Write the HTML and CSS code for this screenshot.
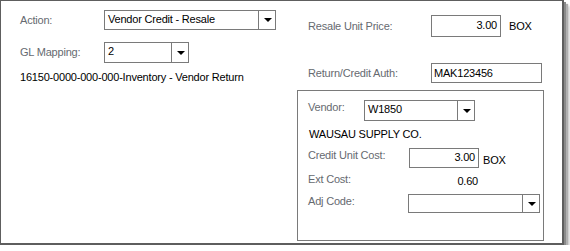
FILE: index.html
```html
<!DOCTYPE html>
<html>
<head>
<meta charset="utf-8">
<link rel="stylesheet" href="styles.css">
</head>
<body>
<div class="frame">
  <div class="left">
    <div class="row r1">
      <span class="lbl w84">Action:</span>
      <div class="combo c-action"><span class="val">Vendor Credit - Resale</span><span class="btn"><i class="tri"></i></span></div>
    </div>
    <div class="row r2">
      <span class="lbl w84">GL Mapping:</span>
      <div class="combo c-gl"><span class="val">2</span><span class="btn"><i class="tri"></i></span></div>
    </div>
    <div class="text account">16150-0000-000-000-Inventory - Vendor Return</div>
  </div>
  <div class="right">
    <div class="row r3">
      <span class="lbl w123">Resale Unit Price:</span>
      <div class="input num i-resale">3.00</div>
      <span class="text unit">BOX</span>
    </div>
    <div class="row r4">
      <span class="lbl w123">Return/Credit Auth:</span>
      <div class="input i-auth">MAK123456</div>
    </div>
    <div class="group">
      <div class="grow g1">
        <span class="lbl w56 up">Vendor:</span>
        <div class="combo c-vendor"><span class="val">W1850</span><span class="btn"><i class="tri"></i></span></div>
      </div>
      <div class="text company">WAUSAU SUPPLY CO.</div>
      <div class="grow g2">
        <span class="lbl w101 up">Credit Unit Cost:</span>
        <div class="input num i-credit">3.00</div>
        <span class="text unit2">BOX</span>
      </div>
      <div class="grow g3">
        <span class="lbl w101">Ext Cost:</span>
        <span class="text ext">0.60</span>
      </div>
      <div class="grow g4">
        <span class="lbl w100 up">Adj Code:</span>
        <div class="combo c-adj"><span class="val"></span><span class="btn"><i class="tri"></i></span></div>
      </div>
    </div>
  </div>
</div>
</body>
</html>
```
FILE: styles.css
```css
* { box-sizing: border-box; }
html, body { margin: 0; padding: 0; background: #fff; }
body {
  font-family: "Liberation Sans", Arial, sans-serif;
  font-size: 11px;
  line-height: 13px;
  letter-spacing: -0.2px;
  color: #000;
}
.frame {
  width: 564px;
  height: 245px;
  border: 1px solid #5e5e5e;
  border-width: 1px 2px 2px 1px;
  box-shadow: 2px 2px 0 #8a8a8a, 4px 4px 1px #b0b0b0, 6px 6px 2px #d6d6d6;
  display: flex;
  background: #fff;
}
.left {
  width: 296px;
  padding: 9px 0 0 19px;
}
.right {
  flex: 1;
  padding: 14px 0 0 0;
}
.row { display: flex; align-items: center; }
.lbl { color: #666a70; white-space: nowrap; }
.w84 { width: 84px; }
.w123 { width: 123px; }
.w56 { width: 56px; }
.w101 { width: 101px; }
.w100 { width: 100px; }
.up { align-self: flex-start; }

.combo {
  display: flex;
  border: 1px solid #7a7a7a;
  background: #fff;
}
.combo .val { flex: 1; padding: 2px 0 0 3px; white-space: nowrap; overflow: hidden; }
.combo .btn {
  width: 17px;
  border-left: 1px solid #7a7a7a;
  display: flex;
  align-items: center;
  justify-content: center;
}
.tri {
  width: 0; height: 0;
  border-left: 4px solid transparent;
  border-right: 4px solid transparent;
  border-top: 4px solid #000;
  margin-left: 1px;
}
.input {
  border: 1px solid #7a7a7a;
  background: #fff;
  padding: 3px 3px 0 2px;
  white-space: nowrap;
}
.input.num { text-align: right; }

.c-action { width: 172px; height: 20px; }
.r2 { margin-top: 12px; }
.c-gl { width: 85px; height: 21px; }
.account { margin-top: 8px; }

.r3 { padding-left: 11px; }
.i-resale { width: 70px; height: 22px; }
.unit { margin-left: 8px; }
.r4 { padding-left: 11px; margin-top: 26px; }
.i-auth { width: 111px; height: 20px; }

.group {
  margin-top: 7px;
  width: 247px;
  height: 151px;
  border: 1px solid #7a7a7a;
  padding: 9px 0 0 10px;
}
.grow { display: flex; align-items: center; }
.g1 .lbl { padding-top: 1px; }
.c-vendor { width: 111px; height: 21px; }
.company { margin-top: 7px; padding-left: 1px; }
.g2 { margin-top: 7px; }
.g2 .lbl { padding-top: 1px; }
.i-credit { width: 70px; height: 20px; padding-top: 2px; }
.unit2 { margin-left: 4px; margin-top: 4px; }
.g3 { margin-top: 5px; align-items: flex-start; }
.ext { width: 69px; text-align: right; margin-top: 2px; }
.g4 { margin-top: 6px; }
.g4 .lbl { padding-top: 1px; }
.c-adj { width: 132px; height: 19px; margin-left: 0; }
```
